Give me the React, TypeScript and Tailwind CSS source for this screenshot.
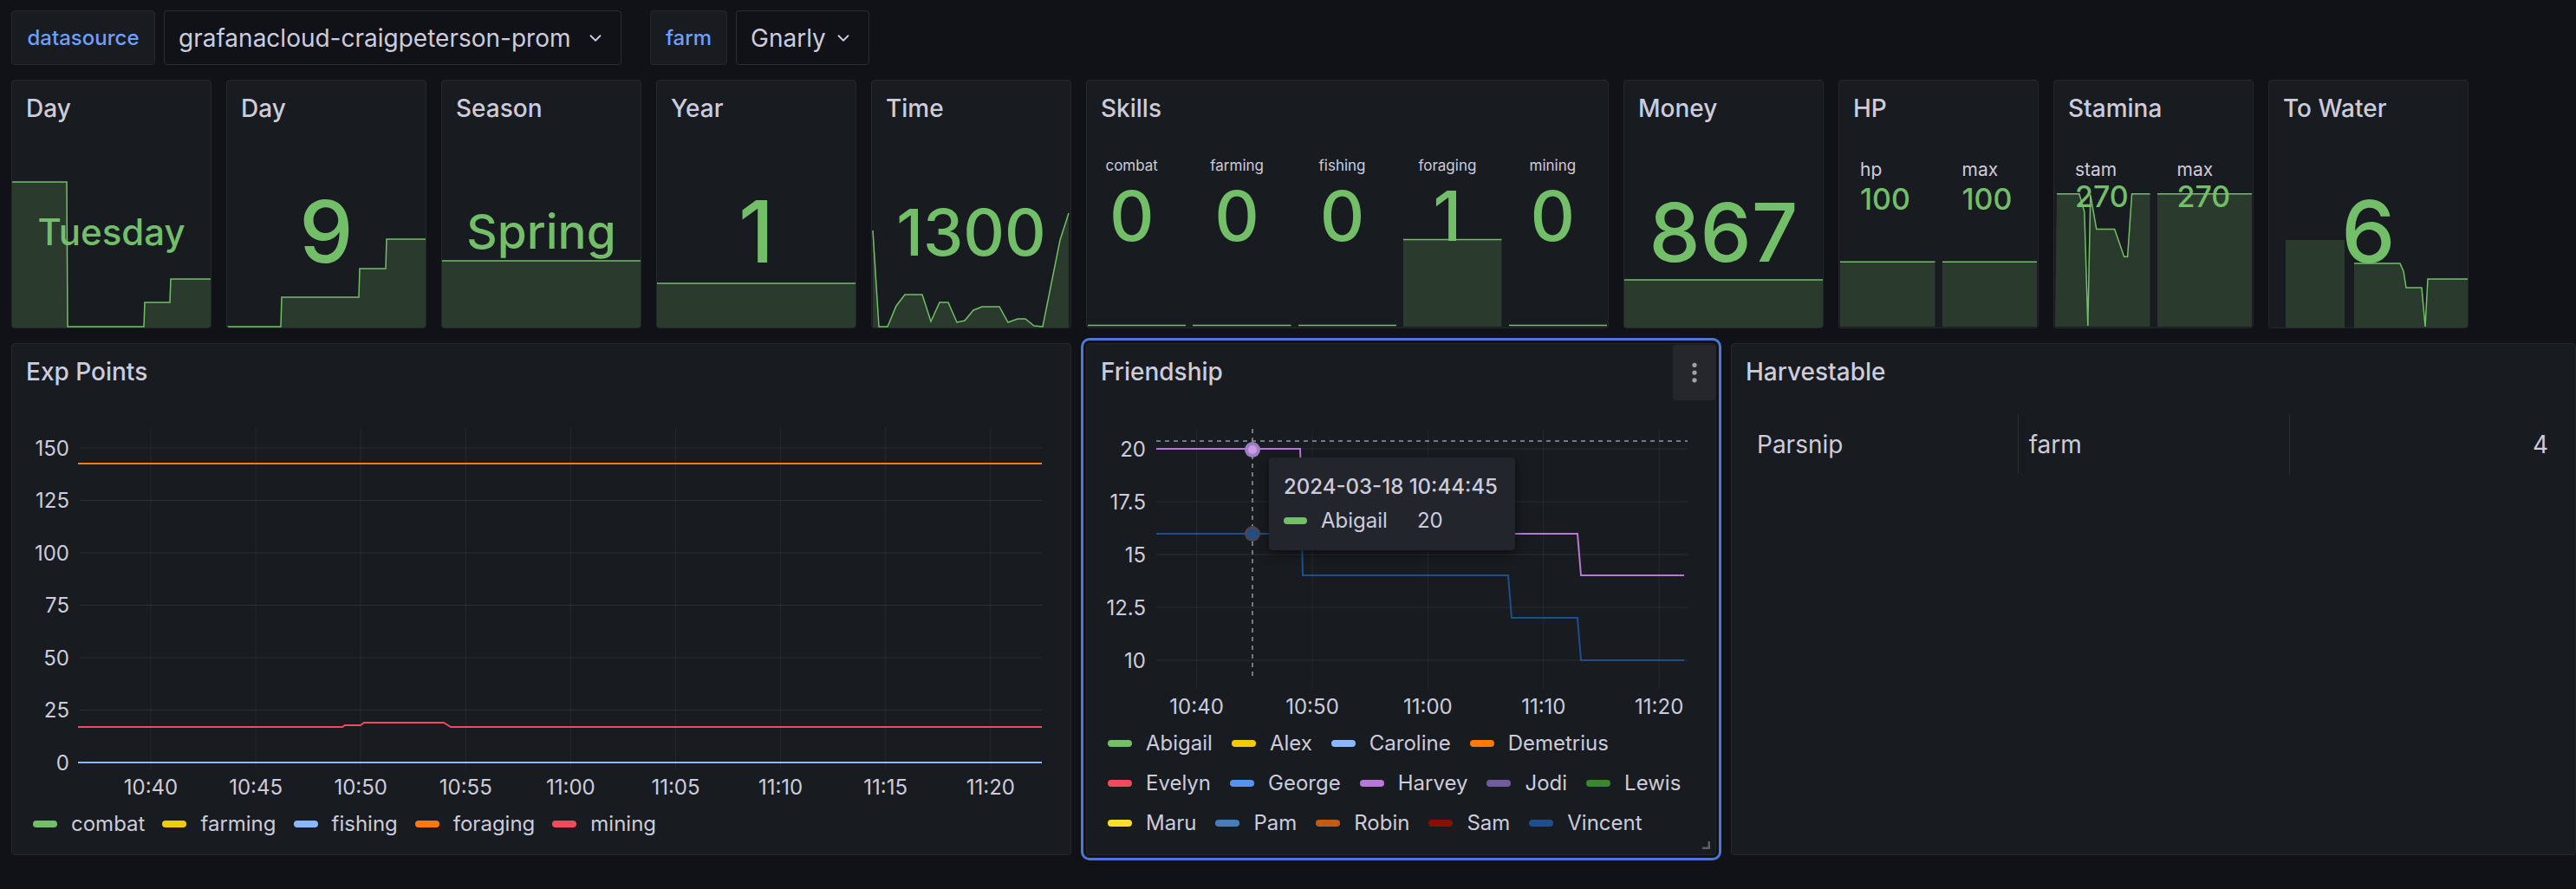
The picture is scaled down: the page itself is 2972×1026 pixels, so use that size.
import { ChevronDown, EllipsisVertical } from "lucide-react";
import type { ReactNode } from "react";

const GREEN = "#73bf69";

const area = (line: string, x0: number, bottom = 286) => `${line} V${bottom} H${x0} Z`;

const Panel = ({ title, className = "", children }: { title: string; className?: string; children?: ReactNode }) => (
  <div className={`relative flex flex-col overflow-hidden rounded-[4px] border border-[#25272c] bg-[#181b1f] ${className}`}>
    <div className="relative z-10 flex h-[64px] shrink-0 items-center px-[16px] text-[28px] font-medium text-[#ccccdc]">
      {title}
    </div>
    {children}
  </div>
);

// sparkline + big value
const StatPanel = ({ title, value, size, line, x0 = 1, fillOnly }: { title: string; value: string; size: string; line?: string; x0?: number; fillOnly?: string }) => (
  <Panel title={title} className="col-span-2">
    <svg className="absolute inset-0 h-full w-full" viewBox="1 1 229 285" preserveAspectRatio="none">
      {fillOnly && <path d={fillOnly} fill={GREEN} fillOpacity={0.2} />}
      {line && <path d={area(line, x0)} fill={GREEN} fillOpacity={0.2} />}
      {line && <path d={line} fill="none" stroke={GREEN} strokeWidth={1.5} />}
    </svg>
    <div className="relative flex flex-1 items-center justify-center">
      <span className={`${size} font-medium leading-none text-[#73bf69]`}>{value}</span>
    </div>
  </Panel>
);

type Col = { label: string; value: string; line: string; fill?: boolean };

// small multi-value columns (Skills / HP / Stamina)
const ColStat = ({ col, w, center, labelCls, valueCls, top, gap }: { col: Col; w: number; center: boolean; labelCls: string; valueCls: string; top: string; gap: string }) => (
  <div className="relative flex-1">
    <svg className="absolute inset-0 h-full w-full" viewBox={`0 65 ${w} 221`} preserveAspectRatio="none">
      {col.fill && <path d={area(col.line, 0)} fill={GREEN} fillOpacity={0.2} />}
      <path d={col.line} fill="none" stroke={GREEN} strokeWidth={1.5} />
    </svg>
    <div className={`relative flex flex-col ${top} ${center ? "items-center pr-[12px]" : "items-start pl-[23px]"}`}>
      <span className={`${labelCls} leading-none text-[#ccccdc]`}>{col.label}</span>
      <span className={`${gap} ${valueCls} font-medium leading-none text-[#73bf69]`}>{col.value}</span>
    </div>
  </div>
);

const skills: Col[] = [
  { label: "combat", value: "0", line: "M0 284.5 H114" },
  { label: "farming", value: "0", line: "M0 284.5 H114" },
  { label: "fishing", value: "0", line: "M0 284.5 H114" },
  { label: "foraging", value: "1", line: "M0 185 H114", fill: true },
  { label: "mining", value: "0", line: "M0 284.5 H114" },
];

const hp: Col[] = [
  { label: "hp", value: "100", line: "M0 211 H110", fill: true },
  { label: "max", value: "100", line: "M0 211 H110", fill: true },
];

const stamina: Col[] = [
  { label: "stam", value: "270", line: "M2 132 H28 L34 153 L38 285 L41 133 L48 173 H69 L80 205 H84 L89 132 H110", fill: true },
  { label: "max", value: "270", line: "M0 132 H110", fill: true },
];

const expLegend = [
  ["combat", "bg-[#73bf69]"],
  ["farming", "bg-[#f2cc0c]"],
  ["fishing", "bg-[#8ab8ff]"],
  ["foraging", "bg-[#ff780a]"],
  ["mining", "bg-[#f2495c]"],
];

const friendLegend = [
  ["Abigail", "bg-[#73bf69]"],
  ["Alex", "bg-[#f2cc0c]"],
  ["Caroline", "bg-[#8ab8ff]"],
  ["Demetrius", "bg-[#ff780a]"],
  ["Evelyn", "bg-[#f2495c]"],
  ["George", "bg-[#5794f2]"],
  ["Harvey", "bg-[#b877d9]"],
  ["Jodi", "bg-[#705da0]"],
  ["Lewis", "bg-[#37872d]"],
  ["Maru", "bg-[#fade2a]"],
  ["Pam", "bg-[#447ebc]"],
  ["Robin", "bg-[#c15c17]"],
  ["Sam", "bg-[#890f02]"],
  ["Vincent", "bg-[#1f4e8c]"],
];

const Legend = ({ items, className }: { items: string[][]; className: string }) => (
  <div className={`flex flex-wrap ${className}`}>
    {items.map(([name, color]) => (
      <div key={name} className="flex h-[24px] items-center gap-[16px] text-[24px] leading-none text-[#ccccdc]">
        <span className={`h-[8px] w-[28px] rounded-full ${color}`} />
        {name}
      </div>
    ))}
  </div>
);

const Select = ({ label, value, lw, sw }: { label: string; value: string; lw: string; sw: string }) => (
  <div className="flex gap-[10px]">
    <div className={`flex ${lw} items-center justify-center rounded-[4px] border border-[#25272c] bg-[#181b1f] text-[24px] font-medium text-[#6e9fff]`}>
      {label}
    </div>
    <div className={`flex ${sw} items-center justify-between rounded-[4px] border border-[#2c2e34] bg-[#111217] pl-[16px] pr-[18px] text-[28px] text-[#ccccdc]`}>
      {value}
      <ChevronDown size={22} strokeWidth={2} className="text-[#ccccdc]" />
    </div>
  </div>
);

const expY = [150, 125, 100, 75, 50, 25, 0];
const expX = ["10:40", "10:45", "10:50", "10:55", "11:00", "11:05", "11:10", "11:15", "11:20"];
const frY = [20, 17.5, 15, 12.5, 10];
const frX = ["10:40", "10:50", "11:00", "11:10", "11:20"];

export default function App() {
  return (
    <div className="min-h-screen bg-[#111217] font-['Inter',sans-serif] text-[#ccccdc]">
      {/* variables */}
      <div className="flex h-[75px] gap-[33px] pl-[13px] pt-[12px]">
        <Select label="datasource" value="grafanacloud-craigpeterson-prom" lw="w-[166px]" sw="w-[528px]" />
        <Select label="farm" value="Gnarly" lw="w-[89px]" sw="w-[154px]" />
      </div>

      <div className="mt-[17px] grid grid-cols-24 grid-rows-[287px_591px] gap-[17px] pl-[13px]">
        <StatPanel title="Day" value="Tuesday" size="text-[42px]" line="M1 118 H64 L65 285 H153 L154 257 H183 L184 230 H230" />
        <StatPanel title="Day" value="9" size="text-[99px]" line="M1 285 H63 L64 251 H153 L154 218 H184 L185 184 H230" />
        <StatPanel title="Season" value="Spring" size="text-[55px]" line="M1 209 H230" />
        <StatPanel title="Year" value="1" size="text-[99px]" line="M1 235 H230" />
        <StatPanel
          title="Time"
          value="1300"
          size="text-[74px]"
          x0={2}
          line="M2 174 L9 285 H19 L29 261 L39 248 H59 L69 279 L79 257 H89 L99 280 L108 278 L118 266 L128 262 H148 L158 280 L169 276 H178 L188 284 L198 285 L218 185 L228 154"
        />

        <Panel title="Skills" className="col-span-5">
          <div className="flex flex-1 gap-[8px] px-[1px] pb-[1px]">
            {skills.map((s) => (
              <ColStat key={s.label} col={s} w={114} center labelCls="text-[17px]" valueCls="text-[80px]" top="pt-[26px]" gap="mt-[9px]" />
            ))}
          </div>
        </Panel>

        <StatPanel title="Money" value="867" size="text-[94px]" line="M1 231 H230" />

        <Panel title="HP" className="col-span-2">
          <div className="flex flex-1 gap-[8px] px-[1px] pb-[1px]">
            {hp.map((s) => (
              <ColStat key={s.label} col={s} w={110} center={false} labelCls="text-[21px]" valueCls="text-[34px]" top="pt-[28px]" gap="mt-[7px]" />
            ))}
          </div>
        </Panel>

        <Panel title="Stamina" className="col-span-2">
          <div className="flex flex-1 gap-[8px] px-[1px] pb-[1px]">
            {stamina.map((s) => (
              <ColStat key={s.label} col={s} w={110} center={false} labelCls="text-[21px]" valueCls="text-[34px]" top="pt-[28px]" gap="mt-[4px]" />
            ))}
          </div>
        </Panel>

        <StatPanel
          title="To Water"
          value="6"
          size="text-[99px]"
          x0={99}
          fillOnly="M20 185 H88 V286 H20 Z"
          line="M99 212 H152 L156 221 L159 240 H177 L181 285 L184 230 H230"
        />
        <div className="col-span-1" />

        {/* Exp Points */}
        <Panel title="Exp Points" className="col-span-10">
          <svg width={1221} height={464} viewBox="14 461 1221 464" className="block shrink-0">
            {expY.map((v) => {
              const y = 880 - v * 2.42;
              return (
                <g key={v}>
                  <line x1={92} x2={1202} y1={y} y2={y} stroke="#ccccdc" strokeOpacity={0.1} />
                  <text x={80} y={y + 8.5} textAnchor="end" fontSize={24} fill="#ccccdc">
                    {v}
                  </text>
                </g>
              );
            })}
            {expX.map((t, i) => {
              const x = 174 + i * 121.1;
              return (
                <g key={t}>
                  <line x1={x} x2={x} y1={494} y2={888} stroke="#ccccdc" strokeOpacity={0.08} />
                  <text x={x} y={916.5} textAnchor="middle" fontSize={24} fill="#ccccdc">
                    {t}
                  </text>
                </g>
              );
            })}
            <path d="M90 535 H1202" stroke="#ff780a" strokeWidth={2} fill="none" />
            <path d="M90 839 H395 L398 837 H416 L420 834 H512 L520 839 H1202" stroke="#f2495c" strokeWidth={2} fill="none" />
            <path d="M90 880 H1202" stroke="#73bf69" strokeWidth={2} fill="none" />
            <path d="M90 880 H1202" stroke="#f2cc0c" strokeWidth={2} fill="none" />
            <path d="M90 880 H1202" stroke="#8ab8ff" strokeWidth={2} fill="none" />
          </svg>
          <Legend items={expLegend} className="mt-[14px] gap-x-[20px] pl-[24px]" />
        </Panel>

        {/* Friendship */}
        <Panel title="Friendship" className="col-span-6 overflow-visible outline-[3px] outline-offset-[3px] outline-solid outline-[#4a78d8]">
          <div className="absolute right-0 top-[1px] z-20 flex h-[64px] w-[49px] items-center justify-center rounded-[4px] bg-[#25272d]">
            <EllipsisVertical size={30} strokeWidth={2.2} className="text-[#9fa2ab]" />
          </div>
          <svg width={725} height={385} viewBox="1254 461 725 385" className="block shrink-0">
            {frY.map((v) => {
              const y = 518 + (20 - v) * 24.4;
              return (
                <g key={v}>
                  <line x1={1334} x2={1947} y1={y} y2={y} stroke="#ccccdc" strokeOpacity={0.1} />
                  <text x={1322} y={y + 8.5} textAnchor="end" fontSize={24} fill="#ccccdc">
                    {v}
                  </text>
                </g>
              );
            })}
            {frX.map((t, i) => {
              const x = 1380.6 + i * 133.4;
              return (
                <g key={t}>
                  <line x1={x} x2={x} y1={495} y2={794} stroke="#ccccdc" strokeOpacity={0.08} />
                  <text x={x} y={823.5} textAnchor="middle" fontSize={24} fill="#ccccdc">
                    {t}
                  </text>
                </g>
              );
            })}
            <path d="M1334 616 H1502 L1503 664 H1740 L1744 713 H1820 L1824 762 H1943" stroke="#1f4e8c" strokeWidth={2} fill="none" />
            <path d="M1334 518 H1500 L1503 616 H1820 L1824 664 H1943" stroke="#b877d9" strokeWidth={2} fill="none" />
            <line x1={1334} x2={1947} y1={509} y2={509} stroke="#8e9aa8" strokeWidth={1.5} strokeDasharray="5 5" />
            <line x1={1445} x2={1445} y1={495} y2={785} stroke="#8e9aa8" strokeWidth={1.5} strokeDasharray="5 5" />
            <circle cx={1445} cy={519} r={9} fill="#9b7fc2" />
            <circle cx={1445} cy={519} r={5} fill="#c99ae6" />
            <circle cx={1445} cy={616} r={9} fill="#4a4456" />
            <circle cx={1445} cy={616} r={5.5} fill="#1f4e8c" />
          </svg>
          <Legend items={friendLegend} className="gap-x-[22px] gap-y-[22px] pl-[24px] pr-[16px]" />

          <div className="absolute left-[210px] top-[131px] z-20 flex h-[107px] w-[284px] flex-col rounded-[4px] bg-[#22252b] px-[17px] pt-[22px] shadow-[0_4px_12px_rgba(0,0,0,0.5)]">
            <span className="text-[24px] font-medium leading-[24px] text-[#ccccdc]">2024-03-18 10:44:45</span>
            <div className="mt-[15px] flex h-[24px] items-center text-[24px] leading-none text-[#ccccdc]">
              <span className="mr-[16px] h-[8px] w-[27px] rounded-full bg-[#73bf69]" />
              Abigail
              <span className="ml-[34px]">20</span>
            </div>
          </div>

          <svg className="absolute bottom-[6px] right-[6px]" width={10} height={10} viewBox="0 0 10 10">
            <path d="M9 1 V9 H1" stroke="#5c5f68" strokeWidth={3} fill="none" />
          </svg>
        </Panel>

        {/* Harvestable */}
        <Panel title="Harvestable" className="col-span-8">
          <div className="mx-[16px] mt-[17px] grid h-[69px] grid-cols-3 text-[28px] text-[#ccccdc]">
            <div className="flex items-center pl-[13px]">Parsnip</div>
            <div className="flex items-center border-l border-[#2c2e33] pl-[12px]">farm</div>
            <div className="flex items-center justify-end border-l border-[#2c2e33] pr-[15px]">4</div>
          </div>
        </Panel>
      </div>
    </div>
  );
}
